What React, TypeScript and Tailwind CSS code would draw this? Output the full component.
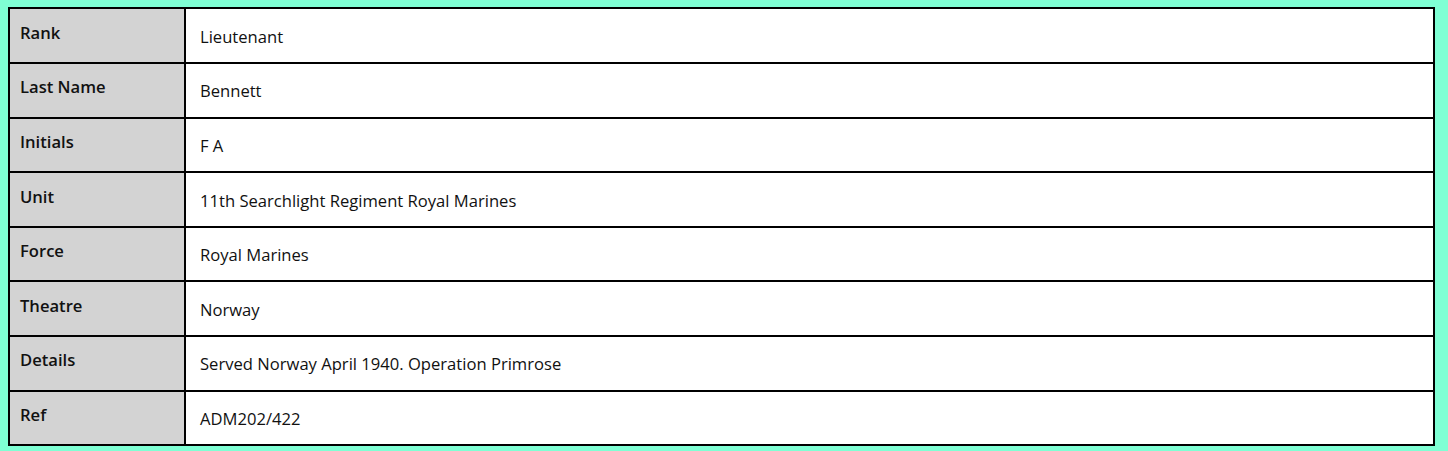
import React from 'react';

const rows: [string, string][] = [
  ['Rank', 'Lieutenant'],
  ['Last Name', 'Bennett'],
  ['Initials', 'F A'],
  ['Unit', '11th Searchlight Regiment Royal Marines'],
  ['Force', 'Royal Marines'],
  ['Theatre', 'Norway'],
  ['Details', 'Served Norway April 1940. Operation Primrose'],
  ['Ref', 'ADM202/422'],
];

export default function App() {
  return (
    <div
      className="w-[1448px] h-[451px] bg-[#7fffd4] pt-[7px] pl-[8px]"
      style={{ fontFamily: '"Open Sans", "Noto Sans", sans-serif' }}
    >
      <div className="w-[1427px] border-2 border-black bg-white text-[16.6px] text-[#111]">
        {rows.map(([label, value], i) => {
          const last = i === rows.length - 1;
          const height = i === 0 ? 'h-[55px]' : last ? 'h-[52.6px]' : 'h-[54.6px]';
          return (
            <div key={label} className={`flex ${height} ${last ? '' : 'border-b-2 border-black'}`}>
              <div className="w-[176px] shrink-0 bg-[#d3d3d3] border-r-2 border-black flex items-center pl-[10px] pb-[5px] font-semibold">
                {label}
              </div>
              <div className="flex-1 flex items-center pl-[14px] pt-[3px]">{value}</div>
            </div>
          );
        })}
      </div>
    </div>
  );
}
